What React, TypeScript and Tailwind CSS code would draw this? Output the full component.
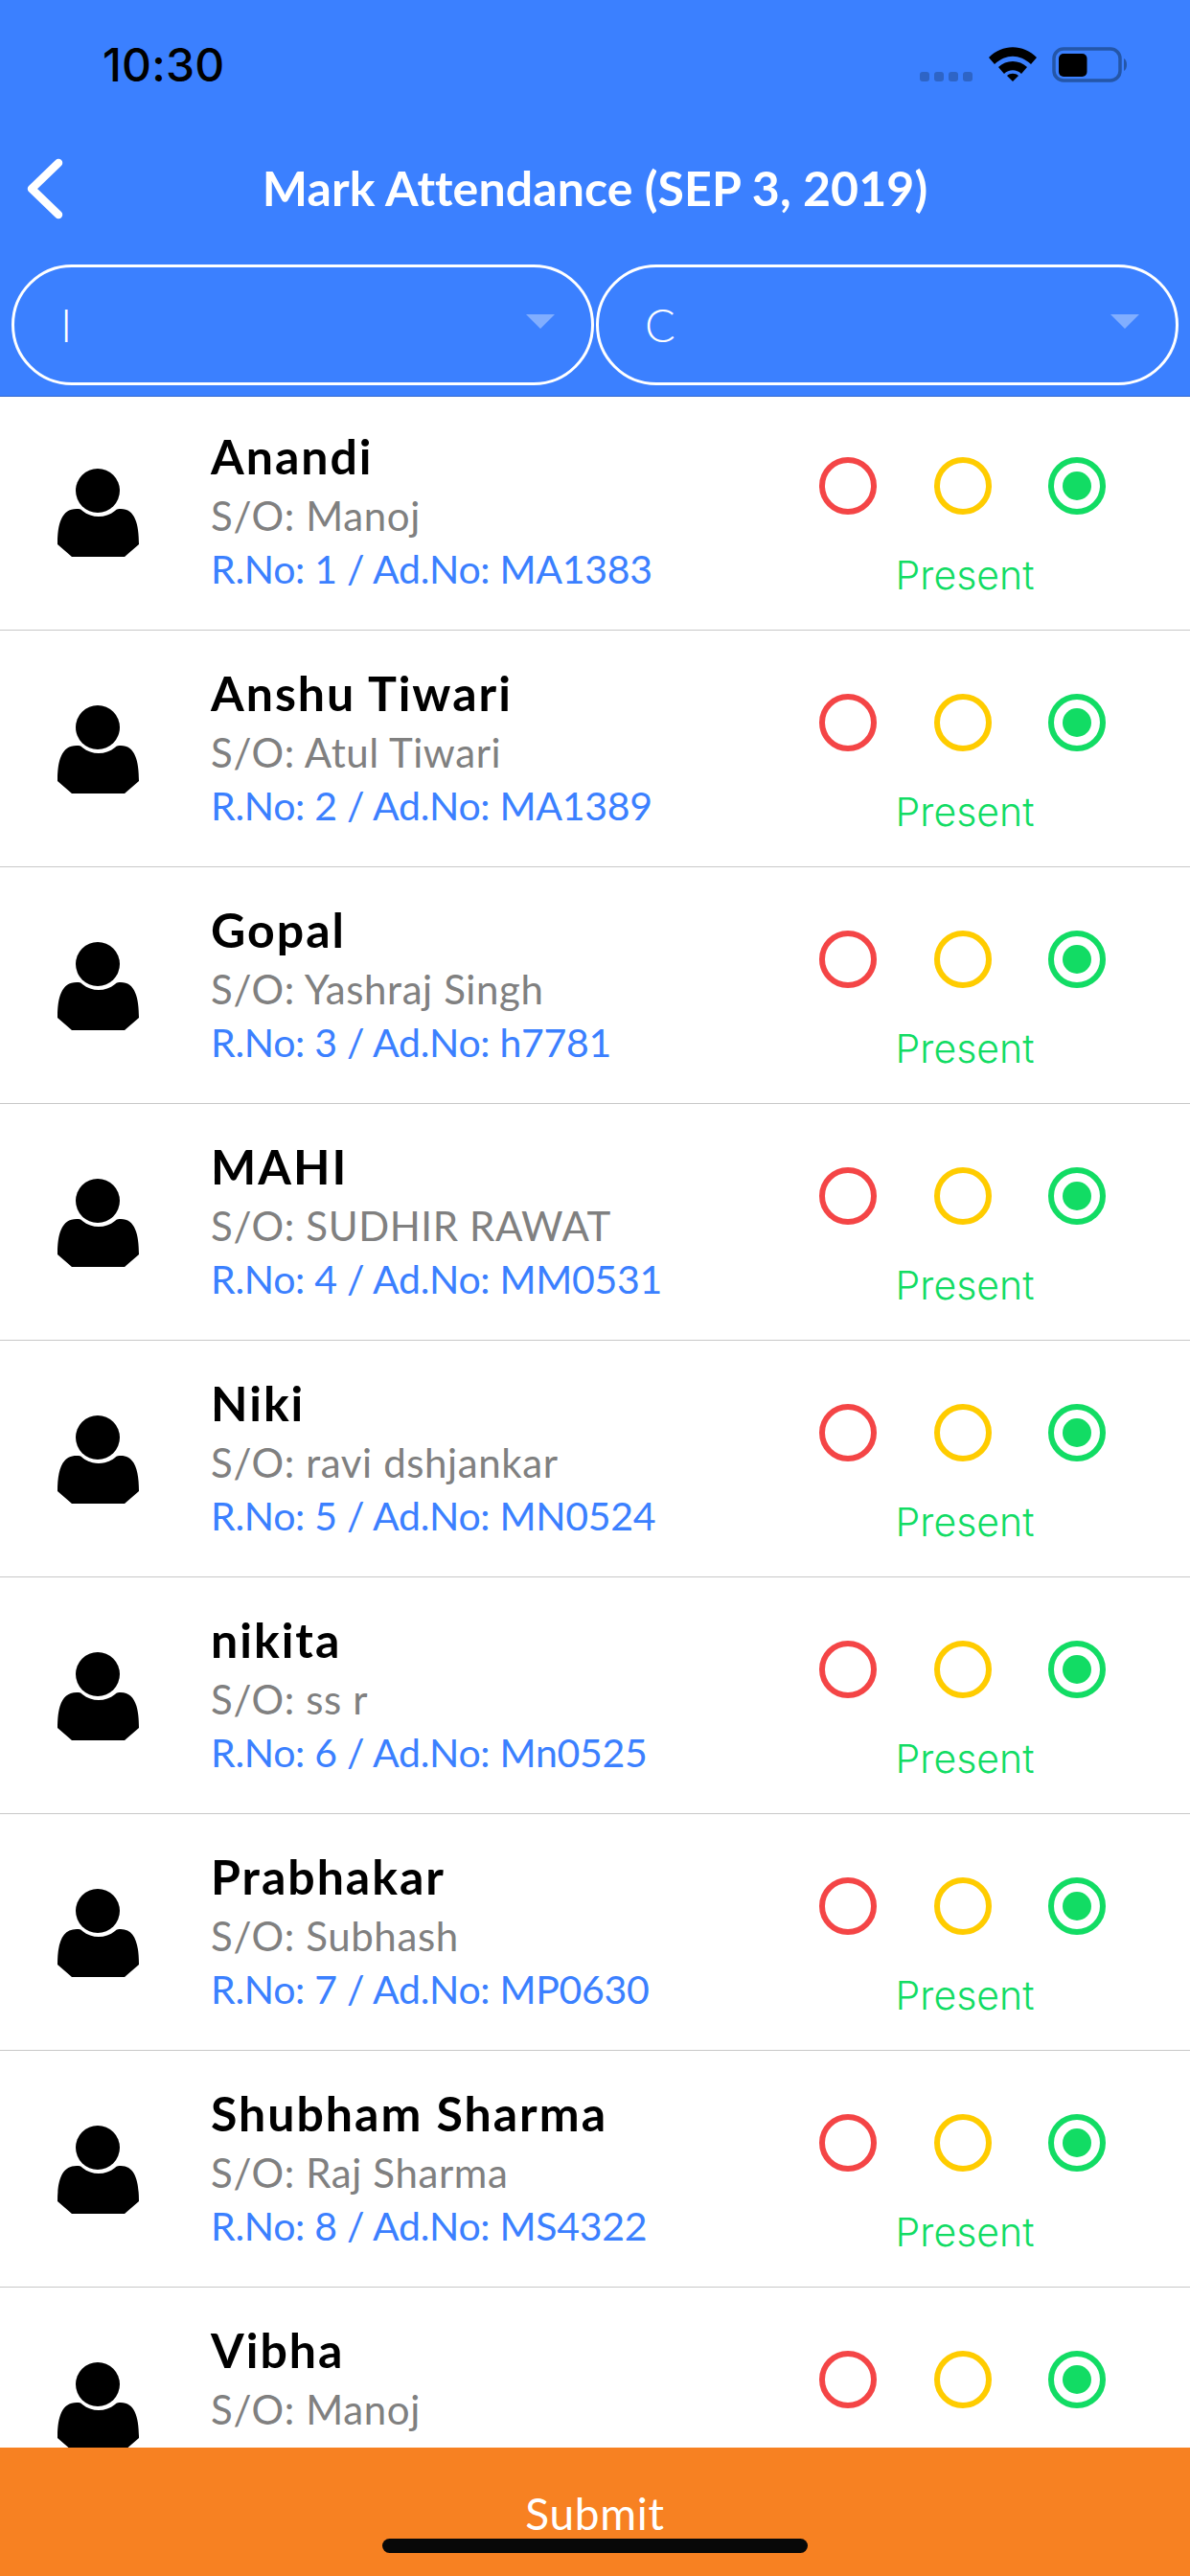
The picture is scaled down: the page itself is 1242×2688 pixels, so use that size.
const students = [
  { name: "Anandi", parent: "Manoj", roll: 1, admission: "MA1383" },
  { name: "Anshu Tiwari", parent: "Atul Tiwari", roll: 2, admission: "MA1389" },
  { name: "Gopal", parent: "Yashraj Singh", roll: 3, admission: "h7781" },
  { name: "MAHI", parent: "SUDHIR RAWAT", roll: 4, admission: "MM0531" },
  { name: "Niki", parent: "ravi dshjankar", roll: 5, admission: "MN0524" },
  { name: "nikita", parent: "ss r", roll: 6, admission: "Mn0525" },
  { name: "Prabhakar", parent: "Subhash", roll: 7, admission: "MP0630" },
  { name: "Shubham Sharma", parent: "Raj Sharma", roll: 8, admission: "MS4322" },
  { name: "Vibha", parent: "Manoj", roll: 9, admission: "MV0101" },
];

function Avatar() {
  return (
    <svg width="85" height="92" viewBox="0 0 85 92" className="block">
      <circle cx="42" cy="23" r="23" fill="#000" />
      <path
        d="M0 79 C0 58 4 42 20 42 C23 42 24 42 26 44 C36 52 50 52 60 44 C62 42 64 42 66 42 C81 42 85 58 85 79 L70 92 L15 92 Z"
        fill="#000"
      />
    </svg>
  );
}

function Radio({ colour, selected }: { colour: string; selected?: boolean }) {
  return (
    <div className={`flex h-[60px] w-[60px] items-center justify-center rounded-full border-[6px] ${colour}`}>
      {selected && <div className="h-[30px] w-[30px] rounded-full bg-[#12dc64]" />}
    </div>
  );
}

function Picker({ value }: { value: string }) {
  return (
    <div className="flex h-[126px] flex-1 items-center justify-between rounded-[63px] border-[3px] border-white pl-[48px] pr-[38px]">
      <span className="text-[47px] font-light text-white">{value}</span>
      <svg width="30" height="15" viewBox="0 0 30 15" className="mb-[8px]">
        <path d="M0 0 H30 L15 15 Z" fill="#ffffff" fillOpacity="0.36" />
      </svg>
    </div>
  );
}

function StudentRow({ student }: { student: (typeof students)[number] }) {
  return (
    <div className="flex h-[247px] border-b border-[#c8c8c8] bg-white">
      <div className="w-[220px] shrink-0 pl-[60px] pt-[78px]">
        <Avatar />
      </div>
      <div className="flex-1 pt-[32px]">
        <div className="text-[50px] font-bold leading-[66px] tracking-[2px] text-black">{student.name}</div>
        <div className="text-[42px] font-normal leading-[58px] tracking-[0.6px] text-[#808080]">
          S/O: {student.parent}
        </div>
        <div className="text-[41px] font-normal leading-[54px] tracking-[-0.3px] text-[#3b80ff]">
          R.No: {student.roll} / Ad.No: {student.admission}
        </div>
      </div>
      <div className="mr-[88px] flex w-[299px] flex-col items-center pt-[66px]">
        <div className="flex gap-[59.5px]">
          <Radio colour="border-[#f44546]" />
          <Radio colour="border-[#ffcc00]" />
          <Radio colour="border-[#12dc64]" selected />
        </div>
        <div className="ml-[5px] mt-[39px] font-['Inter'] text-[41px] font-light leading-[48px] text-[#12dc64]">
          Present
        </div>
      </div>
    </div>
  );
}

export default function App() {
  return (
    <div className="flex h-[2688px] w-[1242px] flex-col overflow-hidden bg-white font-['Lato',sans-serif]">
      <header className="relative z-10 h-[414px] shrink-0 border-b border-[#3268cf] bg-[#3b80ff]">
        {/* status bar */}
        <div className="flex h-[135px] items-start justify-between pl-[107px] pr-[64px] pt-[38px]">
          <span className="font-['Inter'] text-[48px] font-medium leading-[60px] tracking-[0.2px] text-black">10:30</span>
          <div className="flex items-start pt-[11px]">
            <div className="mr-[17px] mt-[26px] flex gap-[5px]">
              <div className="h-[10px] w-[10px] rounded-[3px] bg-[#2e64c6]" />
              <div className="h-[10px] w-[10px] rounded-[3px] bg-[#2e64c6]" />
              <div className="h-[10px] w-[10px] rounded-[3px] bg-[#2e64c6]" />
              <div className="h-[10px] w-[10px] rounded-[3px] bg-[#2e64c6]" />
            </div>
            <svg width="50" height="36" viewBox="0 0 50 36">
              <path d="M0 11 C14 -3.500 36 -3.500 50 11 L44 18 C32 7 18 7 6 18 Z" fill="#000" />
              <path d="M10 21 C18 13 32 13 40 21 L34 28 C29 23 21 23 16 28 Z" fill="#000" />
              <path d="M19 30 C22 27 28 27 31 30 L25 36 Z" fill="#000" />
            </svg>
            <svg width="80" height="38" viewBox="0 0 80 38" className="ml-[16px]">
              <rect x="2" y="2" width="69" height="33" rx="10" fill="none" stroke="#2456a8" strokeWidth="3.500" />
              <rect x="7" y="7" width="29.500" height="24" rx="5" fill="#000" />
              <path d="M75 12 C79 14 79 23 75 25 Z" fill="#2456a8" />
            </svg>
          </div>
        </div>
        {/* title row */}
        <div className="relative flex h-[126px] items-center justify-center">
          <svg width="48" height="68" viewBox="0 0 48 68" className="absolute left-[24px] top-[29px]">
            <path d="M37 6 L9 33 L37 60" fill="none" stroke="#fff" strokeWidth="8.500" strokeLinecap="round" strokeLinejoin="round" />
          </svg>
          <h1 className="mb-[4px] text-[50px] font-bold leading-[60px] tracking-[0.1px] text-white">Mark Attendance (SEP 3, 2019)</h1>
        </div>
        {/* class and section pickers */}
        <div className="mt-[15px] flex gap-[2px] px-[12px]">
          <Picker value="I" />
          <Picker value="C" />
        </div>
      </header>
      <main className="-mt-[3px] min-h-0 flex-1 overflow-hidden">
        {students.map((student) => (
          <StudentRow key={student.roll} student={student} />
        ))}
      </main>
      <footer className="relative z-10 h-[134px] shrink-0 bg-[#f78122] pt-[41px] text-center">
        <span className="text-[46px] font-normal leading-[56px] tracking-[0.7px] text-white">Submit</span>
        <div className="absolute bottom-[24px] left-[399px] h-[15px] w-[444px] rounded-full bg-[#080808]" />
      </footer>
    </div>
  );
}
